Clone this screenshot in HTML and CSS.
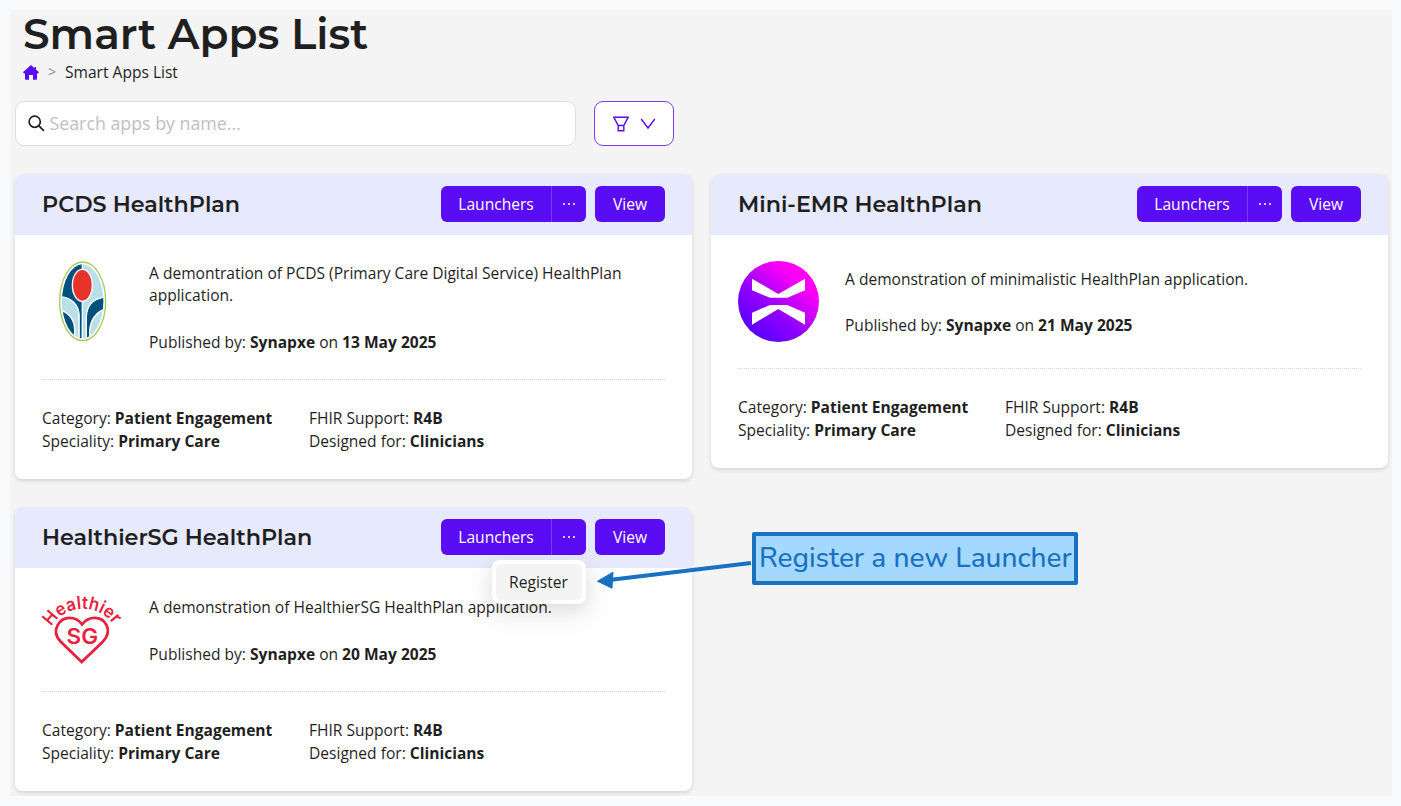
FILE: index.html
```html
<!DOCTYPE html>
<html lang="en">
<head>
<meta charset="utf-8">
<title>Smart Apps List</title>
<link rel="stylesheet" href="styles.css">
</head>
<body>
<main class="page">
  <h1 class="page-title">Smart Apps List</h1>
  <nav class="crumbs">
    <svg class="home" viewBox="0 0 16 15"><path d="M8 0 0 7.2 1 8.4h1V14q0 .8.8.8H6V10h4v4.800h3.200q.8 0 .8-.8V8.400h1L16 7.200 13 4.500V2h-1.500v1.200Z"/></svg>
    <span class="sep">&gt;</span>
    <span>Smart Apps List</span>
  </nav>
  <div class="toolbar">
    <label class="search">
      <svg class="glass" viewBox="0 0 17 17"><circle cx="6.700" cy="6.700" r="5.600"/><path d="m10.700 10.700 5.200 5.200"/></svg>
      <span>Search apps by name...</span>
    </label>
    <button class="filter">
      <svg viewBox="0 0 16 16" class="funnel"><path d="M.8 1.200h14.400L10.800 9.500H5.200ZM5.200 9.500v5.300h5.600V9.500"/></svg>
      <svg viewBox="0 0 16 12" class="chevron"><path d="m1.200 1 6.800 9 6.800-9"/></svg>
    </button>
  </div>

  <section class="cards">
    <article class="card">
      <header class="card-head">
        <h2>PCDS HealthPlan</h2>
        <div class="actions">
          <div class="split"><button class="btn main">Launchers</button><button class="btn more"><i></i><i></i><i></i></button></div>
          <button class="btn view">View</button>
        </div>
      </header>
      <div class="card-body">
        <div class="intro">
          <svg class="logo" viewBox="66 63 243 243">
            <defs><clipPath id="pod"><ellipse cx="188" cy="184" rx="62" ry="111"/></clipPath></defs>
            <ellipse cx="188" cy="184" rx="69" ry="118" fill="#fff" stroke="#a3cb5c" stroke-width="4"/>
            <g clip-path="url(#pod)">
              <path fill="#b9dfe8" d="M120 60h136v250H120Z"/>
              <path fill="#00507e" d="M120 60h67v122l-2 115h-6v-72q-3-45-59-57Z"/>
              <path fill="#b9dfe8" d="M120 170q54 5 57 57v80h-57Z"/>
              <path fill="#00507e" d="M120 210q43 13 44 60v40h-44Z"/>
              <path fill="#00507e" d="M256 171q-55 7-57 60v80h10v-40q4-48 47-65Z"/>
              <path fill="none" stroke="#fff" stroke-width="4" d="M187 60v30M187 180v125M120 170q54 5 57 57v80M120 210q43 13 44 60v40M256 171q-55 7-57 60v80M256 206q-43 17-47 65v40"/>
            </g>
            <ellipse cx="187" cy="136" rx="30" ry="48" fill="#e6342b" stroke="#fff" stroke-width="4"/>
          </svg>
          <div class="about">
            <p>A demontration of PCDS (Primary Care Digital Service) HealthPlan application.</p>
            <p>Published by: <b>Synapxe</b> on <b>13 May 2025</b></p>
          </div>
        </div>
        <hr>
        <div class="facts">
          <div>Category: <b>Patient Engagement</b><br>Speciality: <b>Primary Care</b></div>
          <div>FHIR Support: <b>R4B</b><br>Designed for: <b>Clinicians</b></div>
        </div>
      </div>
    </article>

    <article class="card">
      <header class="card-head">
        <h2>Mini-EMR HealthPlan</h2>
        <div class="actions">
          <div class="split"><button class="btn main">Launchers</button><button class="btn more"><i></i><i></i><i></i></button></div>
          <button class="btn view">View</button>
        </div>
      </header>
      <div class="card-body">
        <div class="intro">
          <svg class="logo" viewBox="114 303 243 243">
            <defs><linearGradient id="glow" x1=".2" y1=".86" x2=".8" y2=".14"><stop offset="0" stop-color="#6000ff"/><stop offset=".35" stop-color="#8c00ff"/><stop offset=".85" stop-color="#f800f8"/><stop offset="1" stop-color="#ff00f4"/></linearGradient></defs>
            <circle cx="235.500" cy="424.500" r="121.500" fill="url(#glow)"/>
            <path fill="#fff" d="m156 356 79 46 80-46v35l-53 22h-52l-54-22ZM156 458l54-23h52l53 23v36l-80-47-79 47Z"/>
          </svg>
          <div class="about">
            <p>A demonstration of minimalistic HealthPlan application.</p>
            <p>Published by: <b>Synapxe</b> on <b>21 May 2025</b></p>
          </div>
        </div>
        <hr>
        <div class="facts">
          <div>Category: <b>Patient Engagement</b><br>Speciality: <b>Primary Care</b></div>
          <div>FHIR Support: <b>R4B</b><br>Designed for: <b>Clinicians</b></div>
        </div>
      </div>
    </article>

    <article class="card">
      <header class="card-head">
        <h2>HealthierSG HealthPlan</h2>
        <div class="actions">
          <div class="split"><button class="btn main">Launchers</button><button class="btn more"><i></i><i></i><i></i></button>
            <div class="menu"><div class="menu-item">Register</div></div>
          </div>
          <button class="btn view">View</button>
        </div>
      </header>
      <div class="card-body">
        <div class="intro">
          <svg class="logo heart" viewBox="0 0 81 70.500">
            <path id="arc" fill="none" d="M9.200 31.800A37.300 37.300 0 0 1 74 33.500"/>
            <text class="arc-text"><textPath href="#arc" textLength="74" lengthAdjust="spacingAndGlyphs">Healthier</textPath></text>
            <path fill="none" stroke="#e8213f" stroke-width="2.800" d="M39.700 67 18.500 46.500C8 35 18 22.800 27.500 22.800c6 0 10 3 12.600 6.500 2.600-3.500 6.600-6.500 12.600-6.500C63 22.800 71.500 35 61 46.500Z"/>
            <text class="sg-text" x="24.500" y="48.500" textLength="31.500" lengthAdjust="spacingAndGlyphs">SG</text>
          </svg>
          <div class="about">
            <p>A demonstration of HealthierSG HealthPlan application.</p>
            <p>Published by: <b>Synapxe</b> on <b>20 May 2025</b></p>
          </div>
        </div>
        <hr>
        <div class="facts">
          <div>Category: <b>Patient Engagement</b><br>Speciality: <b>Primary Care</b></div>
          <div>FHIR Support: <b>R4B</b><br>Designed for: <b>Clinicians</b></div>
        </div>
      </div>
    </article>
  </section>
</main>
<svg class="arrow" viewBox="0 0 160 30"><path d="M156 8 14 25" stroke="#1971c2" stroke-width="4"/><path d="m2.500 26.500 15.500-9-1 16Z" transform="translate(0 -.3)" fill="#1971c2" stroke="#1971c2" stroke-linejoin="round"/></svg>
<div class="callout">Register a new Launcher</div>
</body>
</html>
```

FILE: styles.css
```css
* { box-sizing: border-box; }
body { margin: 0; padding: 10px 9px 10px 10px; height: 806px; background: #f9fafc; color: #1f1f1f; font: 15.570px/22.300px "Open Sans", "Noto Sans", sans-serif; }
h1, h2, p { margin: 0; }
.page { height: 786px; padding: 0 4px 0 5px; background: #f4f4f4; }
.page-title, h2 { font-family: "Montserrat", "Inter", sans-serif; font-weight: 600; white-space: nowrap; }
.page-title { padding-left: 8px; font-size: 42.300px; line-height: 48px; }
.crumbs { display: flex; align-items: center; height: 28px; padding-left: 8px; }
.home { width: 16px; height: 15px; fill: #5a0cf5; }
.sep { margin: 0 9px; color: #8c8c8c; font-size: 14px; }
.toolbar { display: flex; gap: 18px; margin-top: 15px; }
.search { display: flex; align-items: center; gap: 4.500px; width: 561px; height: 45px; padding-left: 12px; background: #fff; border: 1.500px solid #dedede; border-radius: 9px; color: #bfbfbf; font-size: 17.800px; }
.glass { width: 17px; height: 17px; fill: none; stroke: #1f1f1f; stroke-width: 1.700; }
.filter { display: flex; align-items: center; justify-content: center; gap: 11px; width: 80px; height: 45px; padding: 0; background: #fff; border: 1.500px solid #7b3cf7; border-radius: 9px; }
.filter svg { fill: none; stroke: #5a0cf5; stroke-width: 1.400; }
.funnel { width: 16px; height: 16px; }
.chevron { width: 16px; height: 12px; }
.cards { display: grid; grid-template-columns: 677px 677px; column-gap: 19px; row-gap: 28.500px; align-items: start; margin-top: 28px; }
.card { background: #fff; border-radius: 8px; box-shadow: 0 2px 4px rgba(0,0,0,.13); }
.card-head { display: flex; justify-content: space-between; align-items: center; height: 61px; padding: 0 27px 1px; background: #e7e9fd; border-radius: 8px 8px 0 0; }
h2 { font-size: 22.260px; line-height: 28px; }
.actions { display: flex; gap: 9px; }
.split { position: relative; display: flex; }
.btn { height: 36px; padding: 0; background: #5a0cf5; color: #fff; border: 0; border-radius: 6px; font: 15.570px/36px "Open Sans", "Noto Sans", sans-serif; }
.main { width: 110px; border-radius: 6px 0 0 6px; }
.more { display: flex; align-items: center; justify-content: center; gap: 3px; width: 35px; border-left: 1px solid #7b3df7; border-radius: 0 6px 6px 0; }
.more i { width: 2px; height: 2px; border-radius: 1px; background: #fff; }
.view { width: 70px; }
.card-body { padding: 26.400px 27px 27px; }
.intro { display: flex; align-items: center; gap: 26px; }
.logo { flex: none; align-self: flex-start; width: 81px; height: 81px; }
.about { padding-top: .500px; }
.heart { height: 70.500px; overflow: visible; }
.arc-text { font: 600 18px "Inter", sans-serif; fill: #e8213f; }
.sg-text { font: 600 21px "Inter", sans-serif; fill: #e8213f; }
.about p + p { margin-top: 24.500px; }
hr { margin: 26px 0 27px; border: 0; border-top: 1px dotted #d6d6d6; }
.facts { display: grid; grid-template-columns: 267px 1fr; }
.menu { position: absolute; z-index: 2; top: 41px; left: 50.500px; padding: 4px; background: #fff; border-radius: 8px; box-shadow: 0 6px 16px rgba(0,0,0,.08), 0 9px 28px 8px rgba(0,0,0,.05); }
.menu-item { width: 86px; height: 36px; border-radius: 5px; background: #f4f4f4; line-height: 36px; text-align: center; }
.callout { position: absolute; left: 752px; top: 532px; width: 326px; height: 53px; padding-left: 3px; background: #a5d8ff; border: 4px solid #1971c2; border-radius: 2px; color: #1971c2; font: 500 28px/44px "Nunito", "Lato", sans-serif; white-space: nowrap; }
.arrow { position: absolute; left: 595px; top: 555px; width: 160px; height: 30px; overflow: visible; }
```
